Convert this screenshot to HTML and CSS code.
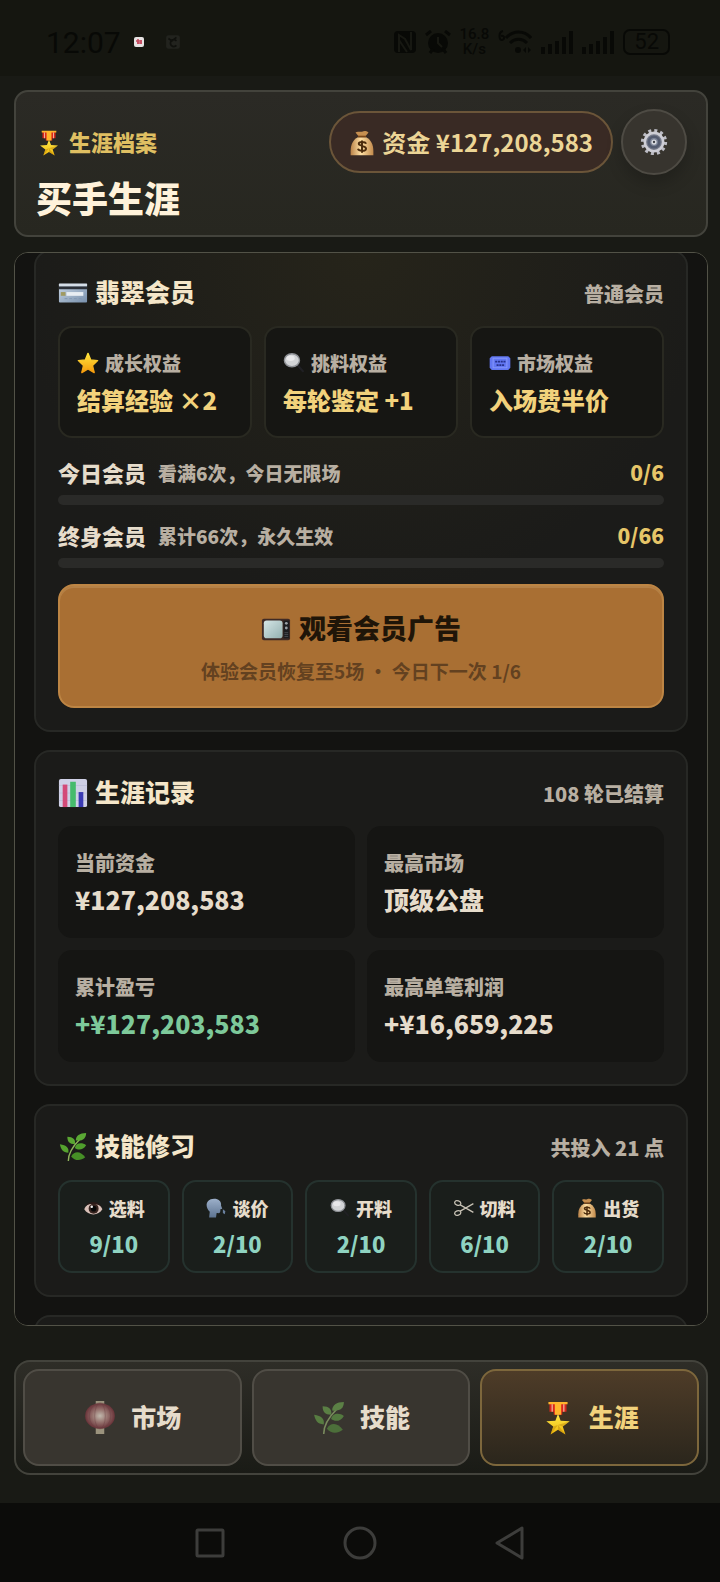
FILE: index.html
```html
<!DOCTYPE html>
<html lang="zh-CN">
<head>
    <meta charset="UTF-8">
    <meta name="viewport" content="width=device-width, initial-scale=1.0">
    <title>买手生涯</title>
    <link rel="stylesheet" href="styles.css">
</head>
<body>

    <!-- icon sprite -->
    <svg class="sprite" width="0" height="0" aria-hidden="true">
        <defs>
            <linearGradient id="gold" x1="0" y1="0" x2="0" y2="1">
                <stop offset="0" stop-color="#ffe63d"/>
                <stop offset="1" stop-color="#f59a0c"/>
            </linearGradient>
            <linearGradient id="medal-gold" x1="0" y1="0" x2="0" y2="1">
                <stop offset="0" stop-color="#ffe94a"/>
                <stop offset="1" stop-color="#efb80c"/>
            </linearGradient>
            <linearGradient id="bag" x1="0" y1="0" x2="1" y2="0">
                <stop offset="0" stop-color="#b98248"/>
                <stop offset="0.45" stop-color="#ffe0a4"/>
                <stop offset="1" stop-color="#c28a4c"/>
            </linearGradient>
            <linearGradient id="steel" x1="0" y1="0" x2="1" y2="1">
                <stop offset="0" stop-color="#c9d6e4"/>
                <stop offset="1" stop-color="#7890ac"/>
            </linearGradient>
            <linearGradient id="screen" x1="0" y1="0" x2="1" y2="1">
                <stop offset="0" stop-color="#d5e6e6"/>
                <stop offset="1" stop-color="#93b0b0"/>
            </linearGradient>
            <linearGradient id="head" x1="0" y1="0" x2="0" y2="1">
                <stop offset="0" stop-color="#9db0ca"/>
                <stop offset="1" stop-color="#5d7492"/>
            </linearGradient>
            <radialGradient id="lamp">
                <stop offset="0" stop-color="#fff0dc"/>
                <stop offset="0.5" stop-color="#d08a84"/>
                <stop offset="1" stop-color="#982c3c"/>
            </radialGradient>
        </defs>

        <symbol id="i-medal" viewBox="0 0 32 32">
            <path fill="#d9261c" d="M8 2h16v8h-4v3h-8v-3H8z"/>
            <path fill="#ffb52b" d="M7 1h18v2H7zM13 3h6v10h-6z"/>
            <path fill="#f3cfb0" d="M10 3h1v7h-1zM21 3h1v7h-1z"/>
            <path fill="url(#medal-gold)" d="M16 12l2.500 6.500 8.500.5-6.500 5 2.500 7.500-7-4.500-7 4.500 2.500-7.500L5 19l8.500-.5z"/>
            <path fill="#b57a08" opacity=".4" d="M16 22.500l7 9-7-4.500zM16 22.500L27 19l-6.500 5zM16 22.500L9 31.500l2.500-7.500z"/>
        </symbol>

        <symbol id="i-bag" viewBox="0 0 32 32">
            <path fill="#c68f50" d="M8 3c3-2 5 0 8-1s5-1 8 1l-4 5h-8z"/>
            <path fill="url(#bag)" d="M11 9h10c6 3 9 9 9 17v5H2v-5C2 18 5 12 11 9z"/>
            <path fill="#7a4618" d="M11 7h10v2H11z"/>
            <path fill="none" stroke="#4b2b0c" stroke-width="2.400" d="M21 17c-1-3-9-3-9 0s9 2 9 6-9 3-10 0M16 13v15"/>
        </symbol>

        <symbol id="i-gear" viewBox="0 0 32 32">
            <circle cx="16" cy="16" r="13" fill="none" stroke="#bcbcc4" stroke-width="4" stroke-dasharray="3.400 3.400"/>
            <circle cx="16" cy="16" r="10.500" fill="#747989" stroke="#cdcdd5" stroke-width="3"/>
            <circle cx="16" cy="16" r="6" fill="#7c8498" stroke="#535b70" stroke-width="3"/>
            <circle cx="16" cy="16" r="3" fill="#d8dae0"/>
            <circle cx="16" cy="16" r="1.300" fill="#3b3d45"/>
        </symbol>

        <symbol id="i-card" viewBox="0 0 32 32">
            <rect x="1" y="6" width="30" height="20" rx="1" fill="url(#steel)"/>
            <path fill="#d4dde6" d="M1 6h30v3H1z"/>
            <path fill="#2b3038" d="M1 9h30v3H1z"/>
            <path fill="#e8edf2" d="M9 15h18v4H9z"/>
            <path fill="#a09a62" d="M3 15h5v4H3z"/>
            <path stroke="#7f95b0" stroke-dasharray="3 2" d="M7 22h20"/>
        </symbol>

        <symbol id="i-star" viewBox="0 0 32 32">
            <path fill="url(#gold)" stroke="url(#gold)" stroke-width="2" stroke-linejoin="round" d="M16 2l4 9.500 10 1-7.500 7 2.500 10.500-9-5.500L7 30l2.500-10.500L2 12.500l10-1z"/>
        </symbol>

        <symbol id="i-glass" viewBox="0 0 32 32">
            <path stroke="#202024" stroke-width="3" stroke-linecap="round" d="M22 20l7 8"/>
            <ellipse cx="13" cy="12" rx="11" ry="9.500" fill="#d2d4d6" stroke="#8e9196" stroke-width="2"/>
            <ellipse cx="11" cy="9" rx="6" ry="4" fill="#e8e8ea"/>
        </symbol>

        <symbol id="i-ticket" viewBox="0 0 32 32">
            <path fill="#6277f2" d="M4 6h24l3 3v14l-3 3H4l-3-3V9z"/>
            <path fill="none" stroke="#8496fa" stroke-width="1.500" d="M6 9h20v14H6z"/>
            <path stroke="#26318c" stroke-width="2.500" stroke-dasharray="3 1" d="M9 14h15M11 19h11"/>
        </symbol>

        <symbol id="i-tv" viewBox="0 0 32 32">
            <rect x="1" y="6" width="30" height="23" rx="2" fill="#3f2a25"/>
            <rect x="3" y="8" width="20" height="19" rx="3" fill="url(#screen)"/>
            <path fill="#1c1c20" d="M24 8h6v19h-6z"/>
            <circle cx="27" cy="11" r="1.500" fill="#9aa0a6"/>
            <circle cx="27" cy="16" r="1.500" fill="#9aa0a6"/>
            <path stroke="#4a4d53" d="M25 21h4M25 23h4M25 25h4"/>
        </symbol>

        <symbol id="i-chart" viewBox="0 0 32 32">
            <rect x="1" y="1" width="30" height="30" rx="2" fill="#cfd0e6"/>
            <path stroke="#c0c2dc" d="M1 8h30M1 16h30M1 24h30"/>
            <path fill="#d34a78" d="M5 7h5v24H5z"/>
            <path fill="#46bb6c" d="M13 4h6v27h-6z"/>
            <path fill="#3a3ab4" d="M22 15h5v16h-5z"/>
        </symbol>

        <symbol id="i-herb" viewBox="0 0 32 32">
            <path fill="none" stroke="#8fb45c" stroke-width="1.500" d="M11 31c0-8 5-16 12-23"/>
            <path fill="#5aa834" d="M19 9c0-5 4-8 11-8 0 6-4 9-11 8z"/>
            <path fill="#5aa632" d="M18 13c-6 0-8-3-8-8 6 0 9 3 8 8z"/>
            <path fill="#4f9e2c" d="M18 17c1-6 8-6 12-3-3 5-8 6-12 3z"/>
            <path fill="#55a22e" d="M11 22c-6 0-8-4-9-9 7 1 10 4 9 9z"/>
            <path fill="#468f26" d="M14 26c4-7 11-5 15 1-5 4-11 4-15-1z"/>
        </symbol>

        <symbol id="i-eye" viewBox="0 0 32 32">
            <path fill="#d9c0b8" d="M2 18C7 5 25 4 31 18 25 29 8 29 2 18z"/>
            <path fill="#2a1a18" d="M4 13C9 4 24 4 30 14 24 9 9 8 4 13z"/>
            <circle cx="17" cy="17" r="8" fill="#38241f"/>
            <circle cx="17" cy="17" r="4.500" fill="#070707"/>
            <circle cx="14" cy="14" r="2" fill="#f3f3f3"/>
        </symbol>

        <symbol id="i-talk" viewBox="0 0 32 32">
            <path fill="url(#head)" d="M13 1c8 0 12 5 11 11l2 5-3 1c0 5 0 7-6 6l-1 7H5l1-9C-2 15-1 1 13 1z"/>
            <path fill="#6a809e" d="M27 18l4 3-1 5-3-2z"/>
        </symbol>

        <symbol id="i-cut" viewBox="0 0 32 32">
            <g fill="none" stroke="#c9c3b6" stroke-width="2">
                <ellipse cx="6" cy="8" rx="5" ry="3.500" transform="rotate(20 6 8)"/>
                <ellipse cx="6" cy="24" rx="5" ry="3.500" transform="rotate(-20 6 24)"/>
                <path d="M10 11l21 12M10 21L31 9"/>
            </g>
        </symbol>

        <symbol id="i-lantern" viewBox="0 0 32 32">
            <path fill="#c9bb92" d="M12 0h8v3h-8zM12 25h8v6h-8z"/>
            <ellipse cx="16" cy="14" rx="14" ry="12" fill="url(#lamp)"/>
            <g fill="none" stroke="#8c3a44" opacity=".35">
                <ellipse cx="16" cy="14" rx="5" ry="12"/>
                <ellipse cx="16" cy="14" rx="10" ry="12"/>
            </g>
        </symbol>
    </svg>

    <div class="status-bar">
        <div class="status-left">
            <span class="clock">12:07</span>
            <svg class="notice" viewBox="0 0 12 12" aria-hidden="true">
                <rect x="1" y="1" width="10" height="10" rx="2" fill="#e6e2e2"/>
                <path stroke="#c4475c" stroke-width="1.500" d="M3 5h6M4 7h5M5 3v5M8 4v4"/>
            </svg>
            <svg class="notice-dim" viewBox="0 0 14 14" aria-hidden="true">
                <rect x="1" y="1" width="12" height="12" rx="2" fill="#22231e"/>
                <path fill="none" stroke="#10110d" stroke-width="1.500" d="M3 4l3 2 4-3M10 6a3 3 0 1 0 0 4"/>
            </svg>
        </div>
        <div class="status-right">
            <svg width="22" height="24" viewBox="0 0 22 24" aria-hidden="true">
                <rect x="0" y="1" width="22" height="22" rx="4" fill="#080906"/>
                <path fill="none" stroke="#171812" stroke-width="2" d="M5 22V5l6 4 6 11V2M5 10l8 12"/>
            </svg>
            <svg width="26" height="24" viewBox="0 0 26 24" aria-hidden="true">
                <circle cx="13" cy="13" r="10" fill="#080906"/>
                <path stroke="#080906" stroke-width="3" d="M1 5l5-4M25 5l-5-4M5 23l3-4M21 23l-3-4"/>
                <path fill="none" stroke="#171812" stroke-width="2" d="M13 7v6l4 4"/>
            </svg>
            <span class="net-speed">16.8<br>K/s</span>
            <svg width="34" height="24" viewBox="0 0 34 24" aria-hidden="true">
                <g fill="none" stroke="#080906" stroke-width="3">
                    <path d="M8 8c7-8 18-8 25 0M12 13c5-5 12-5 17 0"/>
                    <path stroke-width="2" d="M5 1c-5 1-4 9-1 9s3-5-1-4"/>
                </g>
                <circle cx="20" cy="20" r="3" fill="#080906"/>
                <path fill="#080906" d="M25 20l3-3v6zM33 20l-3-3v6z"/>
            </svg>
            <svg width="32" height="24" viewBox="0 0 32 24" aria-hidden="true">
                <path stroke="#080906" stroke-width="4" d="M2 24v-7M9 24V14M16 24V11M23 24V7M30 24V1"/>
            </svg>
            <svg width="32" height="24" viewBox="0 0 32 24" aria-hidden="true">
                <path stroke="#080906" stroke-width="4" d="M2 24v-7M9 24V14M16 24V11M23 24V7M30 24V1"/>
            </svg>
            <span class="battery">52</span>
        </div>
    </div>

    <div class="app">
        <header class="top-bar">
            <div class="top-row">
                <p class="eyebrow"><svg class="icon icon-md"><use href="#i-medal"/></svg>生涯档案</p>
                <div class="funds"><svg class="icon icon-md"><use href="#i-bag"/></svg>资金 ¥127,208,583</div>
                <button class="settings-btn" aria-label="设置"><svg class="icon icon-lg"><use href="#i-gear"/></svg></button>
            </div>
            <h1>买手生涯</h1>
        </header>

        <main class="scroll-panel" id="panel">
            <section class="card member-card">
                <div class="card-head">
                    <h2><svg class="icon icon-xl"><use href="#i-card"/></svg>翡翠会员</h2>
                    <span class="card-note">普通会员</span>
                </div>

                <div class="benefits">
                    <div class="benefit">
                        <span class="benefit-label"><svg class="icon icon-sm"><use href="#i-star"/></svg>成长权益</span>
                        <strong>结算经验 ×2</strong>
                    </div>
                    <div class="benefit">
                        <span class="benefit-label"><svg class="icon icon-sm"><use href="#i-glass"/></svg>挑料权益</span>
                        <strong>每轮鉴定 +1</strong>
                    </div>
                    <div class="benefit">
                        <span class="benefit-label"><svg class="icon icon-sm"><use href="#i-ticket"/></svg>市场权益</span>
                        <strong>入场费半价</strong>
                    </div>
                </div>

                <div class="progress-list">
                    <div class="progress">
                        <div class="progress-text">
                            <b>今日会员</b>
                            <span>看满6次，今日无限场</span>
                            <em>0/6</em>
                        </div>
                        <div class="track"></div>
                    </div>
                    <div class="progress">
                        <div class="progress-text">
                            <b>终身会员</b>
                            <span>累计66次，永久生效</span>
                            <em>0/66</em>
                        </div>
                        <div class="track"></div>
                    </div>
                </div>

                <button class="ad-btn">
                    <span class="ad-title"><svg class="icon icon-xl"><use href="#i-tv"/></svg>观看会员广告</span>
                    <span class="ad-sub">体验会员恢复至5场 ・ 今日下一次 1/6</span>
                </button>
            </section>

            <section class="card">
                <div class="card-head">
                    <h2><svg class="icon icon-xl"><use href="#i-chart"/></svg>生涯记录</h2>
                    <span class="card-note">108 轮已结算</span>
                </div>
                <div class="records">
                    <div class="record"><span>当前资金</span><strong>¥127,208,583</strong></div>
                    <div class="record"><span>最高市场</span><strong>顶级公盘</strong></div>
                    <div class="record"><span>累计盈亏</span><strong class="gain">+¥127,203,583</strong></div>
                    <div class="record"><span>最高单笔利润</span><strong>+¥16,659,225</strong></div>
                </div>
            </section>

            <section class="card">
                <div class="card-head">
                    <h2><svg class="icon icon-xl"><use href="#i-herb"/></svg>技能修习</h2>
                    <span class="card-note">共投入 21 点</span>
                </div>
                <div class="skills">
                    <div class="skill"><span><svg class="icon icon-xs"><use href="#i-eye"/></svg>选料</span><strong>9/10</strong></div>
                    <div class="skill"><span><svg class="icon icon-xs"><use href="#i-talk"/></svg>谈价</span><strong>2/10</strong></div>
                    <div class="skill"><span><svg class="icon icon-xs"><use href="#i-glass"/></svg>开料</span><strong>2/10</strong></div>
                    <div class="skill"><span><svg class="icon icon-xs"><use href="#i-cut"/></svg>切料</span><strong>6/10</strong></div>
                    <div class="skill"><span><svg class="icon icon-xs"><use href="#i-bag"/></svg>出货</span><strong>2/10</strong></div>
                </div>
            </section>

            <section class="card"></section>
        </main>

        <nav class="tabs">
            <button class="tab"><svg class="icon icon-tab"><use href="#i-lantern"/></svg>市场</button>
            <button class="tab"><svg class="icon icon-tab"><use href="#i-herb"/></svg>技能</button>
            <button class="tab active"><svg class="icon icon-tab"><use href="#i-medal"/></svg>生涯</button>
        </nav>
    </div>

    <div class="system-nav">
        <svg viewBox="0 0 34 34" aria-hidden="true"><rect x="4" y="4" width="26" height="26" rx="1"/></svg>
        <svg viewBox="0 0 34 34" aria-hidden="true"><circle cx="17" cy="17" r="15"/></svg>
        <svg viewBox="0 0 34 34" aria-hidden="true"><path d="M29 2v30L4 17z"/></svg>
    </div>

    <script>
        document.getElementById('panel').scrollTop = 21;
    </script>
</body>
</html>
```

FILE: styles.css
```css
* {
    box-sizing: border-box;
}

body {
    margin: 0;
    height: 100vh;
    display: flex;
    flex-direction: column;
    background-color: #191a15;
    color: #e6dccb;
    font-family: "Noto Sans CJK SC", sans-serif;
    font-weight: 900;
}

h1, h2, p {
    margin: 0;
    font-weight: 900;
}

button {
    font-family: inherit;
    font-weight: inherit;
    cursor: pointer;
}

.sprite {
    position: absolute;
}

/* icons */
.icon {
    flex: none;
}

.icon-xs {
    width: 20px;
    height: 20px;
}

.icon-sm {
    width: 22px;
    height: 22px;
}

.icon-md {
    width: 26px;
    height: 26px;
}

.icon-lg {
    width: 28px;
    height: 28px;
}

.icon-xl {
    width: 30px;
    height: 30px;
}

.icon-tab {
    width: 34px;
    height: 34px;
}

h2 .icon,
.eyebrow .icon,
.funds .icon,
.tab .icon {
    margin-top: 4px;
}

/* phone status bar */
.status-bar {
    flex: none;
    height: 76px;
    padding: 8px 50px 0 46px;
    display: flex;
    justify-content: space-between;
    align-items: center;
    background-color: #151610;
    color: #080906;
    font-family: Roboto, sans-serif;
    font-weight: normal;
}

.status-left,
.status-right {
    display: flex;
    align-items: center;
}

.status-right {
    gap: 9px;
}

.clock {
    font-size: 30px;
}

.notice {
    width: 12px;
    height: 12px;
    margin-left: 12px;
}

.notice-dim {
    width: 16px;
    height: 16px;
    margin-left: 20px;
}

.net-speed {
    font-size: 15px;
    line-height: 15px;
    font-weight: 500;
    text-align: center;
}

.battery {
    padding: 0 9px;
    border: 2px solid #080906;
    border-radius: 7px;
    font-size: 22px;
    line-height: 22px;
}

/* app frame */
.app {
    flex: 1;
    min-height: 0;
    padding: 14px 12px 28px 14px;
    display: flex;
    flex-direction: column;
}

.top-bar {
    flex: none;
    height: 147px;
    padding: 17px 19px 0 20px;
    border: 2px solid #43433c;
    border-radius: 14px;
    background: linear-gradient(#2b2a25, #272720);
}

.top-row {
    display: flex;
    align-items: center;
    gap: 8px;
}

.eyebrow {
    flex: 1;
    display: flex;
    align-items: center;
    gap: 7px;
    padding-bottom: 2px;
    font-size: 22px;
    line-height: 32px;
    color: #dfbf62;
}

.funds {
    height: 62px;
    padding: 0 18px 2px;
    display: flex;
    align-items: center;
    gap: 7px;
    border: 2px solid #6b5539;
    border-radius: 31px;
    background-color: #392a24;
    color: #ecd596;
    font-size: 24px;
    font-weight: bold;
}

.settings-btn {
    width: 66px;
    height: 66px;
    padding: 0;
    display: flex;
    align-items: center;
    justify-content: center;
    border: 2px solid #4e4b44;
    border-radius: 50%;
    background-color: #37342e;
    box-shadow: 0 8px 16px rgba(0, 0, 0, 0.2);
}

h1 {
    font-size: 36px;
    line-height: 44px;
    color: #fff2da;
}

.scroll-panel {
    flex: 1;
    min-height: 0;
    margin: 15px 0 34px;
    padding: 18px 19px;
    display: flex;
    flex-direction: column;
    gap: 18px;
    overflow-y: auto;
    scrollbar-width: none;
    border: 1px solid #525247;
    border-radius: 14px;
    background-color: #131311;
}

.card {
    flex: none;
    min-height: 120px;
    padding: 22px;
    border: 2px solid #272825;
    border-radius: 16px;
    background-color: #1b1b19;
}

.member-card {
    background: radial-gradient(circle at 50% 0, #26241a, #1b1b19 60%);
}

.card-head {
    display: flex;
    justify-content: space-between;
    align-items: flex-start;
    margin-bottom: 12px;
}

h2 {
    display: flex;
    align-items: center;
    gap: 7px;
    font-size: 25px;
    line-height: 34px;
    color: #f4e6c9;
}

.card-note {
    font-size: 20px;
    line-height: 40px;
    color: #b8afa2;
}

/* member benefits */
.benefits {
    display: grid;
    grid-template-columns: repeat(3, 1fr);
    gap: 12px;
}

.benefit {
    height: 112px;
    padding: 18px 17px;
    border: 2px solid #292921;
    border-radius: 14px;
    background-color: #161613;
}

.benefit-label {
    display: flex;
    align-items: center;
    gap: 6px;
    font-size: 19px;
    line-height: 34px;
    color: #b8afa2;
}

.benefit strong {
    display: block;
    font-size: 24px;
    line-height: 40px;
    color: #f2d27c;
    white-space: nowrap;
}

.progress-list {
    display: flex;
    flex-direction: column;
    gap: 16px;
    margin: 20px 0 16px;
}

.progress-text {
    display: flex;
    align-items: center;
    margin-bottom: 8px;
    line-height: 29px;
}

.progress-text b {
    font-size: 22px;
}

.progress-text span {
    flex: 1;
    margin-left: 12px;
    font-size: 19px;
    color: #b8afa2;
}

.progress-text em {
    font-size: 21px;
    font-style: normal;
    color: #e6c568;
}

.track {
    height: 10px;
    border-radius: 5px;
    background-color: #2a2a28;
}

.ad-btn {
    width: 100%;
    height: 124px;
    padding: 5px 0 0;
    display: flex;
    flex-direction: column;
    align-items: center;
    justify-content: center;
    gap: 5px;
    border: 2px solid #bd8544;
    border-radius: 16px;
    background-color: #a96f33;
    box-shadow: inset 0 2px 0 #b58147;
}

.ad-title {
    display: flex;
    align-items: center;
    gap: 8px;
    font-size: 27px;
    line-height: 40px;
    color: #1f1508;
}

.ad-sub {
    font-size: 19px;
    line-height: 36px;
    font-weight: bold;
    color: #634120;
}

/* records */
.records {
    display: grid;
    grid-template-columns: repeat(2, 1fr);
    gap: 12px;
}

.record {
    height: 112px;
    padding: 20px 17px;
    border-radius: 14px;
    background-color: #151513;
}

.record span {
    display: block;
    font-size: 20px;
    line-height: 34px;
    color: #b8afa2;
}

.record strong {
    display: block;
    font-size: 25px;
    line-height: 38px;
}

.record .gain {
    color: #7dc99a;
}

/* skills */
.skills {
    display: grid;
    grid-template-columns: repeat(5, 1fr);
    gap: 12px;
}

.skill {
    height: 93px;
    padding: 9px 0;
    border: 2px solid #25322e;
    border-radius: 14px;
    background-color: #1a1e1b;
    text-align: center;
}

.skill span {
    display: flex;
    align-items: center;
    justify-content: center;
    gap: 6px;
    font-size: 18px;
    line-height: 34px;
}

.skill strong {
    display: block;
    font-size: 22px;
    line-height: 36px;
    color: #8fd3c1;
}

/* bottom tabs */
.tabs {
    flex: none;
    display: flex;
    gap: 10px;
    padding: 7px;
    border: 2px solid #43433c;
    border-radius: 16px;
    background: linear-gradient(#2e2d27, #1a1b16);
}

.tab {
    flex: 1;
    height: 97px;
    padding: 0 0 4px;
    display: flex;
    align-items: center;
    justify-content: center;
    gap: 14px;
    border: 2px solid #504d46;
    border-radius: 16px;
    background-color: #38352f;
    color: #e6dccb;
    font-size: 25px;
}

.tab .icon {
    opacity: 0.7;
    filter: saturate(0.7);
}

.tab.active {
    border-color: #7d673c;
    background: linear-gradient(#4e3c28, #2b261c);
    color: #f2d27c;
}

.tab.active .icon {
    opacity: 1;
    filter: none;
}

/* android navigation */
.system-nav {
    flex: none;
    height: 79px;
    display: flex;
    align-items: center;
    justify-content: center;
    gap: 116px;
    background-color: #0c0c0a;
}

.system-nav svg {
    width: 34px;
    height: 34px;
    fill: none;
    stroke: #3d3d3b;
    stroke-width: 3;
    stroke-linejoin: round;
}
```
